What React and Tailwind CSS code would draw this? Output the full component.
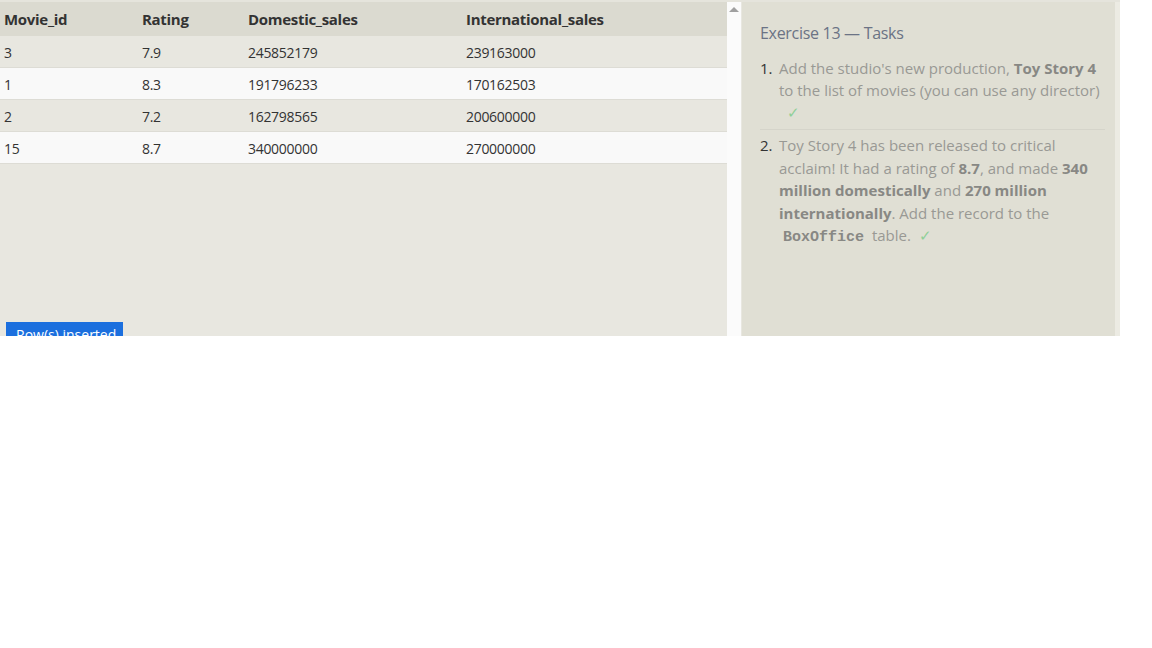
const rows = [
  { id: "3", rating: "7.9", dom: "245852179", intl: "239163000" },
  { id: "1", rating: "8.3", dom: "191796233", intl: "170162503" },
  { id: "2", rating: "7.2", dom: "162798565", intl: "200600000" },
  { id: "15", rating: "8.7", dom: "340000000", intl: "270000000" },
]

function Check() {
  return <span className="ml-2 text-[#8fcf98]">✓</span>
}

export default function App() {
  return (
    <div className="bg-white h-[648px]" style={{ fontFamily: '"Open Sans", "Noto Sans", sans-serif' }}>
      <div className="flex w-[1120px] h-[336px] overflow-hidden bg-[#e5e4dc] pt-[2px]">
        {/* result table */}
        <div className="w-[727px] bg-[#e8e7e0] flex flex-col">
          <div className="flex h-[34px] shrink-0 items-center bg-[#dbdad0] text-[15px] font-bold text-[#333] tracking-[-0.3px]">
            <div className="w-[142px] pl-1">Movie_id</div>
            <div className="w-[106px]">Rating</div>
            <div className="w-[218px]">Domestic_sales</div>
            <div>International_sales</div>
          </div>
          {rows.map((r, i) => (
            <div
              key={r.id}
              className={
                "flex h-[32px] shrink-0 items-center pt-[2px] text-[14px] text-[#333] border-b border-[#dddcd5] tracking-[-0.3px] " +
                (i % 2 === 0 ? "bg-[#e8e7e0]" : "bg-[#f9f9f9]")
              }
            >
              <div className="w-[142px] pl-1">{r.id}</div>
              <div className="w-[106px]">{r.rating}</div>
              <div className="w-[218px]">{r.dom}</div>
              <div>{r.intl}</div>
            </div>
          ))}
          <div className="mt-[158px] pl-[6px] shrink-0">
            <div className="w-[117px] h-[30px] bg-[#1b6fde] text-white text-[14px] pl-[10px] pt-[6px] leading-none whitespace-nowrap">Row(s) inserted</div>
          </div>
        </div>

        {/* scrollbar */}
        <div className="w-[14px] bg-[#fbfbfb] flex justify-center pt-[5px]">
          <div className="w-0 h-0 border-l-[5px] border-r-[5px] border-b-[5px] border-l-transparent border-r-transparent border-b-[#a0a0a0]" />
        </div>
        <div className="w-px bg-[#e8e7e0]" />

        {/* tasks panel */}
        <div className="w-[373px] bg-[#e0dfd4] pl-[18px] pr-[10px] pt-[19px]">
          <h2 className="text-[16px] text-[#6b7385] tracking-[-0.3px] mb-[12px]">Exercise 13 — Tasks</h2>
          <ol className="text-[15px] leading-[22px] text-[#999994]">
            <li className="flex pb-[6px] border-b border-[#d5d4ca]">
              <span className="w-[19px] shrink-0 text-[#333]">1.</span>
              <span>
                Add the studio's new production, <b className="text-[#888884]">Toy Story 4</b> to the list of movies (you can use any director)
                <br />
                <Check />
              </span>
            </li>
            <li className="flex pt-[4px] leading-[22.5px]">
              <span className="w-[19px] shrink-0 text-[#333]">2.</span>
              <span>
                Toy Story 4 has been released to critical acclaim! It had a rating of <b className="text-[#888884]">8.7</b>, and made{" "}
                <b className="text-[#888884]">340 million domestically</b> and <b className="text-[#888884]">270 million internationally</b>. Add the record to the{" "}
                <code className="font-bold text-[#888884] px-1" style={{ fontFamily: '"Liberation Mono", monospace' }}>BoxOffice</code> table.
                <Check />
              </span>
            </li>
          </ol>
        </div>
        <div className="w-[5px] bg-[#ecebe3]" />
      </div>
    </div>
  )
}
